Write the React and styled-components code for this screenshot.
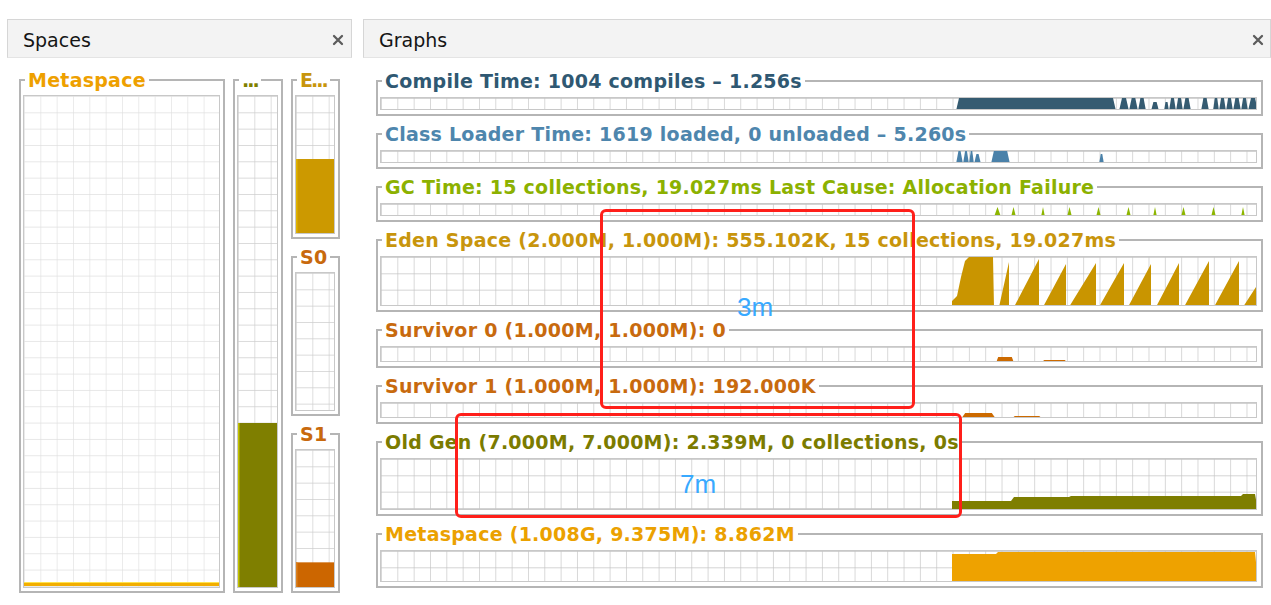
import React, { useId } from 'react'
import styled, { createGlobalStyle } from 'styled-components'

const CELL = 16.33

const GlobalStyle = createGlobalStyle`
  html, body {
    margin: 0;
    background: #fff;
  }
  body {
    font-family: "DejaVu Sans", sans-serif;
  }
`

const Screen = styled.div`
  position: relative;
  display: flex;
  gap: 11px;
  height: 605px;
  box-sizing: border-box;
  padding: 19px 0 0 7px;
  overflow: hidden;
`

const Pane = styled.section`
  display: flex;
  flex-direction: column;
  width: ${p => p.$width || 'auto'};
  flex: ${p => (p.$grow ? 1 : 'none')};
  min-width: 0;
`

const PaneHeader = styled.header`
  flex: none;
  height: 35px;
  display: flex;
  align-items: center;
  justify-content: space-between;
  padding: 2px ${p => p.$padRight}px 0 15px;
  background: #f3f3f3;
  border: 1px solid #d6d6d6;
  border-bottom-color: #e4e4e4;
  font-size: 19px;
  color: #151515;
`

const SpacesBody = styled.div`
  flex: 1;
  min-height: 0;
  display: flex;
  gap: 8px;
  padding: 11px 13px 12px 12px;
`

const Column = styled.div`
  flex: none;
  width: ${p => p.$width}px;
  display: flex;
  flex-direction: column;
  gap: 7px;
`

const GraphsBody = styled.div`
  display: flex;
  flex-direction: column;
  gap: 7px;
  padding: 12px 8px 0 13px;
`

const Group = styled.fieldset`
  display: flex;
  flex-direction: column;
  flex: ${p => (p.$fill ? 1 : 'none')};
  min-height: 0;
  min-width: 0;
  margin: 0;
  border: 2px solid #b5b5b5;
  padding: ${p => (p.$fill ? '4px 3px 3px 2px' : '5px 4px 4px 2px')};
`

const Legend = styled.legend`
  margin-left: 2px;
  padding: 0 3px;
  font: bold 19px/22px "DejaVu Sans", sans-serif;
  letter-spacing: ${p => (p.$tight ? '-2px' : '0.25px')};
  color: ${p => p.$color};
  white-space: nowrap;
`

const PlotSvg = styled.svg`
  display: block;
  width: 100%;
  height: ${p => (p.$h ? `${p.$h}px` : 'auto')};
  flex: ${p => (p.$h ? 'none' : 1)};
  min-height: 0;
  box-sizing: border-box;
  border: 1px solid #c8c8c8;
`

const Frame = styled.div`
  position: absolute;
  border: 3px solid #ff1f1a;
  border-radius: 6px;
`

const Note = styled.span`
  position: absolute;
  font: 26px/26px "Liberation Sans", Arial, sans-serif;
  color: #38a9ff;
`

const CloseIcon = () => (
  <svg width="12" height="12" viewBox="0 0 12 12">
    <path d="M2 2L10 10M10 2L2 10" stroke="#5c5c5c" strokeWidth="2.3" strokeLinecap="round" />
  </svg>
)

const Plot = ({ h, grid = '#c4c4c4', children }) => {
  const id = 'g' + useId().replace(/[^a-zA-Z0-9]/g, '')
  return (
    <PlotSvg $h={h}>
      <defs>
        <pattern id={id} width={CELL} height={CELL} patternUnits="userSpaceOnUse">
          <path d={`M${CELL} 0H0V${CELL}`} fill="none" stroke={grid} strokeWidth="1.3" />
        </pattern>
      </defs>
      <rect width="100%" height="100%" fill={`url(#${id})`} />
      {children}
    </PlotSvg>
  )
}

// trapezoid spikes: [x0, x1, top]
const spikes = (list, h, slope) =>
  list.map(([a, b, t = 0]) => {
    const d = (b - a) * slope
    return [[a, h], [a + d, t], [b - d, t], [b, h]]
  })

const edenTeeth = [
  [618, 628, 5], [633, 658, 2], [662, 685, 7], [688, 715, 6], [718, 743, 6],
  [747, 770, 7], [775, 798, 6], [803, 828, 4], [833, 858, 4], [862, 877, 27],
]

const edenArea = [
  [571, 50], [571, 44], [576, 39], [580, 20], [584, 4], [588, 0], [612, 0], [613, 50],
  ...edenTeeth.flatMap(([s, p, y]) => [[s, 50], [p, y], [p, 50]]),
  [877, 50],
]

const graphs = [
  {
    title: 'Compile Time: 1004 compiles – 1.256s',
    color: '#2f5872',
    fill: '#355b71',
    h: 13,
    shapes: [
      [[575, 13], [578, 0], [732, 0], [735, 13]],
      ...spikes([
        [738, 748], [748, 757], [757, 765], [770, 778, 4], [783, 788, 4], [788, 795], [795, 802],
        [802, 810], [820, 828], [832, 838], [838, 845], [845, 852], [852, 860], [860, 867], [867, 877],
      ], 13, 0.3),
    ],
  },
  {
    title: 'Class Loader Time: 1619 loaded, 0 unloaded – 5.260s',
    color: '#4e86ad',
    fill: '#4a81a9',
    h: 13,
    shapes: [
      ...spikes([[575, 582], [582, 588], [588, 593], [593, 600, 3], [718, 723, 3]], 13, 0.35),
      ...spikes([[610, 629]], 13, 0.15),
    ],
  },
  {
    title: 'GC Time: 15 collections, 19.027ms Last Cause: Allocation Failure',
    color: '#8cb100',
    fill: '#8db600',
    h: 13,
    shapes: spikes([
      [613, 620, 3], [630, 635, 3], [660, 664, 3], [686, 691, 3], [715, 720, 3],
      [745, 750, 3], [772, 776, 3], [800, 805, 3], [830, 835, 3], [860, 864, 3],
    ], 13, 0.5),
  },
  {
    title: 'Eden Space (2.000M, 1.000M): 555.102K, 15 collections, 19.027ms',
    color: '#c8950c',
    fill: '#c99500',
    h: 50,
    shapes: [edenArea],
  },
  {
    title: 'Survivor 0 (1.000M, 1.000M): 0',
    color: '#c86a0e',
    fill: '#cc6a00',
    h: 16,
    shapes: spikes([[615, 633, 10], [660, 687, 13], [717, 746, 14], [772, 802, 14], [831, 860, 14]], 16, 0.12),
  },
  {
    title: 'Survivor 1 (1.000M, 1.000M): 192.000K',
    color: '#c86a0e',
    fill: '#cc6a00',
    h: 16,
    shapes: spikes([
      [580, 615, 10], [630, 662, 13], [687, 717, 14], [747, 772, 15], [802, 830, 14], [860, 877, 14],
    ], 16, 0.12),
  },
  {
    title: 'Old Gen (7.000M, 7.000M): 2.339M, 0 collections, 0s',
    color: '#7b7b00',
    fill: '#7e7e00',
    h: 52,
    shapes: [[
      [571, 52], [571, 42], [630, 42], [633, 38], [688, 38], [690, 37], [860, 37],
      [862, 35], [874, 35], [877, 52],
    ]],
  },
  {
    title: 'Metaspace (1.008G, 9.375M): 8.862M',
    color: '#eba100',
    fill: '#eea200',
    h: 32,
    shapes: [[[571, 32], [571, 3], [615, 3], [617, 1], [874, 1], [877, 32]]],
  },
]

const Bar = ({ level, color, edge }) => (
  <>
    <rect x="0" y={`${100 - level}%`} width="100%" height={`${level}%`} fill={color} />
    <rect x="0" y={`${100 - level}%`} width="1.5" height={`${level}%`} fill={edge} />
  </>
)

const SpaceGroup = ({ title, color, tight, fill, grid, children }) => (
  <Group $fill={fill}>
    <Legend $color={color} $tight={tight}>{title}</Legend>
    <Plot grid={grid}>{children}</Plot>
  </Group>
)

export default function App() {
  return (
    <Screen>
      <GlobalStyle />
      <Pane $width="345px">
        <PaneHeader $padRight={7}>
          <span>Spaces</span>
          <CloseIcon />
        </PaneHeader>
        <SpacesBody>
          <Column $width={206}>
            <SpaceGroup title="Metaspace" color="#eea000" fill grid="#e0e0e0">
              <rect x="0" y="calc(100% - 4px)" width="100%" height="3" fill="#f2ae00" />
              <rect x="0" y="calc(100% - 5px)" width="100%" height="1" fill="#ffe34d" />
            </SpaceGroup>
          </Column>
          <Column $width={50}>
            <SpaceGroup title="..." color="#7f7f00" tight fill grid="#cdcdcd">
              <Bar level={33.4} color="#7f7f00" edge="#c2c200" />
            </SpaceGroup>
          </Column>
          <Column $width={49}>
            <SpaceGroup title="E..." color="#c8950c" tight fill grid="#cdcdcd">
              <Bar level={54} color="#cc9900" edge="#e0b400" />
            </SpaceGroup>
            <SpaceGroup title="S0" color="#c8690d" fill grid="#cdcdcd" />
            <SpaceGroup title="S1" color="#c8690d" fill grid="#cdcdcd">
              <Bar level={18} color="#cc6600" edge="#d98020" />
            </SpaceGroup>
          </Column>
        </SpacesBody>
      </Pane>

      <Pane $grow>
        <PaneHeader $padRight={6}>
          <span>Graphs</span>
          <CloseIcon />
        </PaneHeader>
        <GraphsBody>
          {graphs.map(g => (
            <Group key={g.title}>
              <Legend $color={g.color}>{g.title}</Legend>
              <Plot h={g.h}>
                {g.shapes.map((pts, i) => (
                  <polygon key={i} points={pts.map(p => p.join(',')).join(' ')} fill={g.fill} />
                ))}
              </Plot>
            </Group>
          ))}
        </GraphsBody>
      </Pane>

      <Frame style={{ left: 600, top: 209, width: 309, height: 194 }} />
      <Note style={{ left: 737, top: 294 }}>3m</Note>
      <Frame style={{ left: 455, top: 413, width: 501, height: 99 }} />
      <Note style={{ left: 680, top: 471 }}>7m</Note>
    </Screen>
  )
}
